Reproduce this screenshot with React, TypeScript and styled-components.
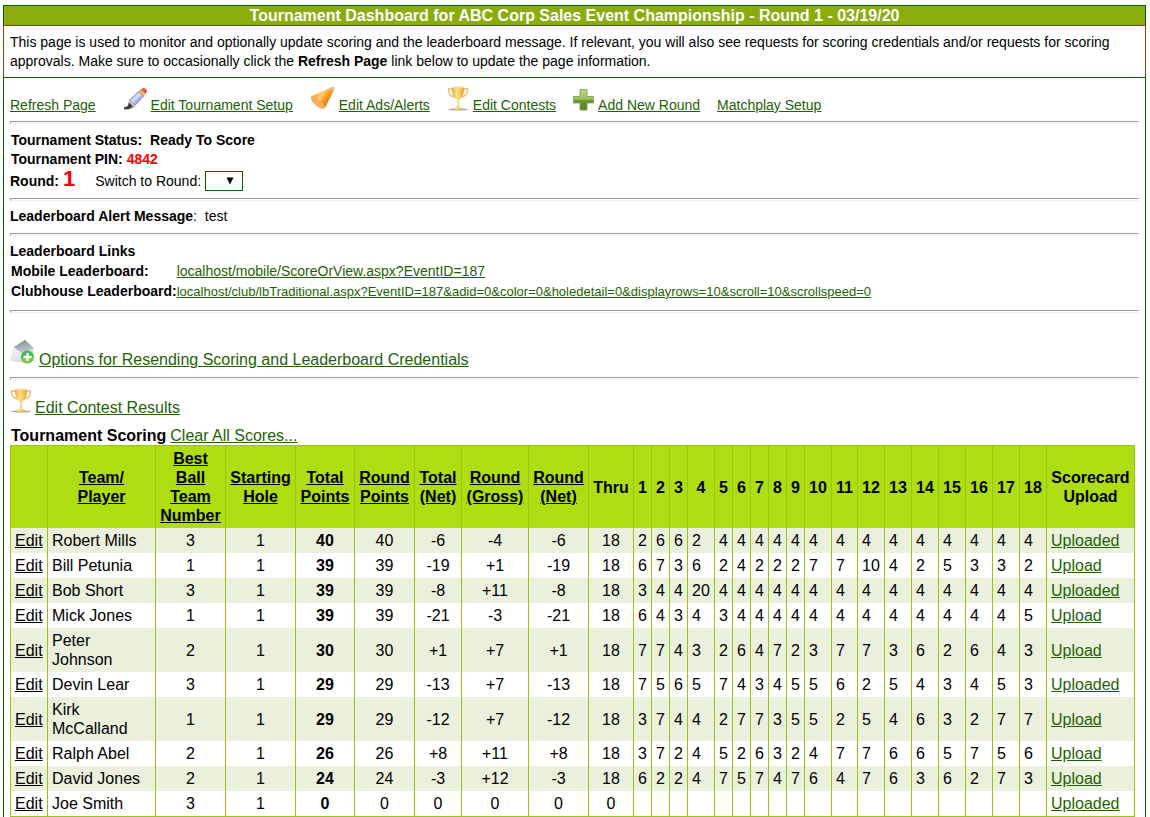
import React from 'react';
import styled, { createGlobalStyle } from 'styled-components';

const GlobalStyle = createGlobalStyle`
  body {
    margin: 0;
    background: #fff;
    color: #000;
    font-family: "Liberation Sans", Arial, sans-serif;
    font-size: 14px;
    line-height: 19px;
  }
`;

const Page = styled.main`
  margin: 5px 4px 0 3px;
`;

const Title = styled.h1`
  margin: 0;
  border: 1px solid #006400;
  border-bottom: 0;
  background: #8aad0c;
  color: #fff;
  font-size: 16px;
  font-weight: bold;
  line-height: 19px;
  text-align: center;
`;

const Intro = styled.p`
  margin: 0;
  border: 1px solid #8b3a1a;
  border-bottom: 0;
  padding: 7px 6px 6px;
`;

const Content = styled.div`
  border: 1px solid #006400;
  border-bottom: 0;
  padding: 0 6px;
`;

const Rule = styled.hr`
  margin: 0;
  border: 1px solid;
  border-color: #9a9a9a #eee #eee #9a9a9a;
  height: 1px;
`;

const Link = styled.a<{ $size?: number; $dark?: boolean }>`
  color: ${(p) => (p.$dark ? '#000' : '#1c6400')};
  font-size: ${(p) => (p.$size ? `${p.$size}px` : 'inherit')};
`;

const Toolbar = styled.nav`
  display: flex;
  align-items: flex-end;
  gap: 17px;
  padding: 8px 0 6px;
`;

const RefreshItem = styled.div`
  padding-right: 10px;
`;

const IconLink = styled.div<{ $gap?: number }>`
  display: flex;
  align-items: flex-end;
  gap: ${(p) => p.$gap ?? 4}px;
`;

const Icon = styled.svg`
  display: block;
  flex: none;
  margin-bottom: 4px;
`;

const StatusSection = styled.section`
  padding: 7px 0 5px;
`;

const AlertSection = styled.section`
  padding: 6px 0 7px;
`;

const Line = styled.div`
  padding-left: 1px;
`;

const Status = styled.strong`
  margin-left: 4px;
`;

const Pin = styled.strong`
  color: #f00;
`;

const RoundLine = styled.div`
  display: flex;
  align-items: center;
  height: 24px;
`;

const RoundNumber = styled.strong`
  margin: 0 20px 6px 4px;
  color: #f00;
  font-size: 22px;
`;

const SelectBox = styled.span`
  position: relative;
  display: inline-block;
  margin-left: 4px;
`;

const RoundSelect = styled.select`
  display: block;
  appearance: none;
  box-sizing: border-box;
  width: 38px;
  height: 20px;
  border: 1px solid #006400;
  border-radius: 0;
  background: #fff;
`;

const Arrow = styled.svg`
  position: absolute;
  top: 6px;
  right: 9px;
  pointer-events: none;
`;

const LinksSection = styled.section`
  padding: 5px 0 9px;
`;

const LinkGrid = styled.div`
  display: grid;
  grid-template-columns: max-content 1fr;
  grid-auto-rows: 20px;
  align-items: center;
  padding-left: 1px;
`;

const Heading = styled.h2`
  margin: 0;
  font-size: 14px;
  line-height: 20px;
`;

const ResendRow = styled.section`
  padding: 26px 0 8px;
  font-size: 16px;
`;

const ContestRow = styled.section`
  padding: 8px 0 9px;
  font-size: 16px;
`;

const ScoringHeading = styled.div`
  display: flex;
  gap: 4px;
  padding-left: 1px;
  font-size: 16px;
`;

const Table = styled.table`
  width: calc(100% - 4px);
  table-layout: fixed;
  border-collapse: collapse;
  border: 1px solid #99c410;
  font-size: 16px;
  line-height: 19px;
`;

const HeadCell = styled.th`
  padding: 3px 0;
  border: solid #99c410;
  border-width: 1px 1px 0;
  background: #aedd11;
  white-space: nowrap;
`;

const Row = styled.tr`
  &:nth-child(odd) {
    background: #ebf0dd;
  }
`;

const Cell = styled.td<{ $center?: boolean; $bold?: boolean }>`
  padding: 3px 0 3px ${(p) => (p.$center ? 0 : 4)}px;
  border: solid #99c410;
  border-width: 0 1px;
  text-align: ${(p) => (p.$center ? 'center' : 'left')};
  font-weight: ${(p) => (p.$bold ? 'bold' : 'normal')};
`;

const PencilIcon = () => (
  <Icon width="25" height="24" viewBox="0 0 25 24" aria-hidden="true">
    <defs>
      <linearGradient id="barrel" x1="0.2" y1="0.2" x2="0.8" y2="0.8">
        <stop offset="0" stopColor="#8284cf" />
        <stop offset="0.4" stopColor="#dfe1fb" />
        <stop offset="0.7" stopColor="#a9abe6" />
        <stop offset="1" stopColor="#6466b4" />
      </linearGradient>
    </defs>
    <path d="M3 22.500 Q9 23 13 19 L9 18Z" fill="#c4c4c4" />
    <path d="M4 20 L6 13 L12 18Z" fill="#e9c79c" />
    <path d="M1 22.500 V20.500 L5 19 L6 15.500 L10 19.500 L6 22Z" fill="#3a3a3e" />
    <path d="M6.500 13 L15.500 4.500 L20.500 9 L12 18.500Z" fill="url(#barrel)" stroke="#6a6cb4" strokeWidth="0.6" />
    <path d="M15.500 4.500 L18 2.500 L22.500 6.500 L20.500 9Z" fill="#efc35a" stroke="#a97e45" strokeWidth="0.5" />
    <path d="M18 2.500 Q20.500 0 23 2 Q25 4 22.500 6.500Z" fill="#d8483a" />
    <path d="M19.500 2.300 Q21.500 1.500 22.500 3.200" stroke="#f29a8c" fill="none" />
  </Icon>
);

const ConeIcon = () => (
  <Icon width="25" height="25" viewBox="0 0 25 25" aria-hidden="true">
    <defs>
      <linearGradient id="cone" x1="0.2" y1="0.2" x2="0.9" y2="0.7">
        <stop offset="0" stopColor="#f39a26" />
        <stop offset="0.35" stopColor="#ffcf74" />
        <stop offset="0.6" stopColor="#f99d1c" />
        <stop offset="1" stopColor="#d96d00" />
      </linearGradient>
    </defs>
    <path d="M1 10.500 L21 1.500 Q25 0 24 4 L15 22 Q12 24 6 19.500 Q0 14 1 10.500Z" fill="url(#cone)" />
    <path d="M1 10.500 Q4 9.500 10 14.500 Q15.500 19 15 22 Q12 24 6 19.500 Q0 14 1 10.500Z" fill="#f5b05a" />
    <path d="M20 2 Q24 -1 24.500 2 Q25 4 23 6Z" fill="#dfc3a4" />
  </Icon>
);

const TrophyIcon = () => (
  <Icon width="22" height="25" viewBox="0 0 22 25" aria-hidden="true">
    <defs>
      <linearGradient id="gold" x1="0" y1="0" x2="1" y2="0">
        <stop offset="0" stopColor="#e9ad35" />
        <stop offset="0.4" stopColor="#ffe08b" />
        <stop offset="1" stopColor="#e6a92e" />
      </linearGradient>
    </defs>
    <ellipse cx="11" cy="23.500" rx="10" ry="1" fill="#aaa" />
    <path d="M6 3 H1.500 Q1 10 8 11 M16 3 H20.500 Q21 10 14 11" fill="none" stroke="#e8bd63" strokeWidth="1.3" />
    <path d="M5 1.500 H17 Q17.500 9 14 12 Q12 13.500 12 15 V19 Q12 21 15.500 22.500 V23.500 H6.500 V22.500 Q10 21 10 19 V15 Q10 13.500 8 12 Q4.500 9 5 1.500Z" fill="url(#gold)" />
    <ellipse cx="11" cy="1.500" rx="6" ry="1" fill="#f6d995" />
  </Icon>
);

const PlusIcon = () => (
  <Icon width="21" height="22" viewBox="0 0 21 22" aria-hidden="true">
    <defs>
      <linearGradient id="plus" x1="0" y1="0" x2="0" y2="1">
        <stop offset="0" stopColor="#b9d48a" />
        <stop offset="0.48" stopColor="#9abc63" />
        <stop offset="0.52" stopColor="#6f9a31" />
        <stop offset="1" stopColor="#55811e" />
      </linearGradient>
    </defs>
    <path d="M7 0.500 H14 V7.500 H20.500 V14 H14 V21 H7 V14 H0.500 V7.500 H7Z" fill="url(#plus)" stroke="#7da04a" strokeWidth="0.8" />
  </Icon>
);

const MailIcon = () => (
  <Icon width="25" height="26" viewBox="0 0 25 26" aria-hidden="true">
    <defs>
      <linearGradient id="paper" x1="0" y1="0" x2="1" y2="1">
        <stop offset="0" stopColor="#fff" />
        <stop offset="1" stopColor="#c8cdd2" />
      </linearGradient>
      <linearGradient id="flap" x1="0" y1="0" x2="0.3" y2="1">
        <stop offset="0" stopColor="#7d8790" />
        <stop offset="1" stopColor="#c4cbd1" />
      </linearGradient>
    </defs>
    <path d="M4 8 L15 1 L23.500 9 L21 20 L14 23.500 L0.500 21.500Z" fill="url(#paper)" stroke="#d5d9dc" strokeWidth="0.5" />
    <path d="M4 8 L15 1 L23.500 9 L13 15Z" fill="url(#flap)" />
    <circle cx="17.500" cy="18" r="6.500" fill="#43b55a" />
    <path d="M11.500 20 Q18 18 24 17 A6.500 6.500 0 0 1 11.500 20Z" fill="#7fce2e" />
    <path d="M17.500 14 V22 M13.500 18 H21.500" stroke="#fff" strokeWidth="2.4" />
  </Icon>
);

const COLUMN_WIDTHS = [
  37, 108, 70, 70, 59, 60, 47, 67, 60, 45,
  18, 18, 18, 27, 18, 18, 18, 18, 18,
  27, 26, 27, 27, 27, 27, 27, 27, 27, 88,
];

const SORT_HEADERS: string[][] = [
  ['Team/', 'Player'],
  ['Best', 'Ball', 'Team', 'Number'],
  ['Starting', 'Hole'],
  ['Total', 'Points'],
  ['Round', 'Points'],
  ['Total', '(Net)'],
  ['Round', '(Gross)'],
  ['Round', '(Net)'],
];

const HOLES = Array.from({ length: 18 }, (_, i) => i + 1);

interface Player {
  name: string;
  stats: string[];
  holes: string;
  upload: string;
}

// Stats: best ball team, starting hole, total points, round points, total net, round gross, round net, thru.
const PLAYERS: Player[] = [
  { name: 'Robert Mills', stats: ['3', '1', '40', '40', '-6', '-4', '-6', '18'], holes: '2 6 6 2 4 4 4 4 4 4 4 4 4 4 4 4 4 4', upload: 'Uploaded' },
  { name: 'Bill Petunia', stats: ['1', '1', '39', '39', '-19', '+1', '-19', '18'], holes: '6 7 3 6 2 4 2 2 2 7 7 10 4 2 5 3 3 2', upload: 'Upload' },
  { name: 'Bob Short', stats: ['3', '1', '39', '39', '-8', '+11', '-8', '18'], holes: '3 4 4 20 4 4 4 4 4 4 4 4 4 4 4 4 4 4', upload: 'Uploaded' },
  { name: 'Mick Jones', stats: ['1', '1', '39', '39', '-21', '-3', '-21', '18'], holes: '6 4 3 4 3 4 4 4 4 4 4 4 4 4 4 4 4 5', upload: 'Upload' },
  { name: 'Peter\nJohnson', stats: ['2', '1', '30', '30', '+1', '+7', '+1', '18'], holes: '7 7 4 3 2 6 4 7 2 3 7 7 3 6 2 6 4 3', upload: 'Upload' },
  { name: 'Devin Lear', stats: ['3', '1', '29', '29', '-13', '+7', '-13', '18'], holes: '7 5 6 5 7 4 3 4 5 5 6 2 5 4 3 4 5 3', upload: 'Uploaded' },
  { name: 'Kirk\nMcCalland', stats: ['1', '1', '29', '29', '-12', '+7', '-12', '18'], holes: '3 7 4 4 2 7 7 3 5 5 2 5 4 6 3 2 7 7', upload: 'Upload' },
  { name: 'Ralph Abel', stats: ['2', '1', '26', '26', '+8', '+11', '+8', '18'], holes: '3 7 2 4 5 2 6 3 2 4 7 7 6 6 5 7 5 6', upload: 'Upload' },
  { name: 'David Jones', stats: ['2', '1', '24', '24', '-3', '+12', '-3', '18'], holes: '6 2 2 4 7 5 7 4 7 6 4 7 6 3 6 2 7 3', upload: 'Upload' },
  { name: 'Joe Smith', stats: ['3', '1', '0', '0', '0', '0', '0', '0'], holes: '', upload: 'Uploaded' },
];

const withBreaks = (lines: string[]) =>
  lines.map((line, i) => (
    <React.Fragment key={line}>
      {i > 0 && <br />}
      {line}
    </React.Fragment>
  ));

const ScoreTable = () => (
  <Table>
    <colgroup>
      {COLUMN_WIDTHS.map((width, i) => (
        <col key={i} width={width} />
      ))}
    </colgroup>
    <thead>
      <tr>
        <HeadCell />
        {SORT_HEADERS.map((lines) => (
          <HeadCell key={lines.join(' ')} scope="col">
            <Link href="#" $dark>{withBreaks(lines)}</Link>
          </HeadCell>
        ))}
        <HeadCell scope="col">Thru</HeadCell>
        {HOLES.map((hole) => (
          <HeadCell key={hole} scope="col">{hole}</HeadCell>
        ))}
        <HeadCell scope="col">{withBreaks(['Scorecard', 'Upload'])}</HeadCell>
      </tr>
    </thead>
    <tbody>
      {PLAYERS.map((player) => {
        const scores = player.holes.split(' ');
        return (
          <Row key={player.name}>
            <Cell><Link href="#" $dark>Edit</Link></Cell>
            <Cell>{withBreaks(player.name.split('\n'))}</Cell>
            {player.stats.map((value, i) => (
              <Cell key={i} $center $bold={i === 2}>{value}</Cell>
            ))}
            {HOLES.map((hole) => (
              <Cell key={hole}>{scores[hole - 1]}</Cell>
            ))}
            <Cell><Link href="#">{player.upload}</Link></Cell>
          </Row>
        );
      })}
    </tbody>
  </Table>
);

export default function App() {
  return (
    <Page>
      <GlobalStyle />
      <Title>Tournament Dashboard for ABC Corp Sales Event Championship - Round 1 - 03/19/20</Title>
      <Intro>
        This page is used to monitor and optionally update scoring and the leaderboard message. If relevant, you will
        also see requests for scoring credentials and/or requests for scoring approvals. Make sure to occasionally
        click the <strong>Refresh Page</strong> link below to update the page information.
      </Intro>
      <Content>
        <Toolbar>
          <RefreshItem><Link href="#">Refresh Page</Link></RefreshItem>
          <IconLink $gap={3}><PencilIcon /><Link href="#">Edit Tournament Setup</Link></IconLink>
          <IconLink><ConeIcon /><Link href="#">Edit Ads/Alerts</Link></IconLink>
          <IconLink><TrophyIcon /><Link href="#">Edit Contests</Link></IconLink>
          <IconLink><PlusIcon /><Link href="#">Add New Round</Link></IconLink>
          <Link href="#">Matchplay Setup</Link>
        </Toolbar>
        <Rule />
        <StatusSection>
          <Line><strong>Tournament Status:</strong> <Status>Ready To Score</Status></Line>
          <Line><strong>Tournament PIN:</strong> <Pin>4842</Pin></Line>
          <RoundLine>
            <strong>Round:</strong>
            <RoundNumber>1</RoundNumber>
            <label htmlFor="round">Switch to Round:</label>
            <SelectBox>
              <RoundSelect id="round" defaultValue="">
                <option value="" />
                <option value="1">1</option>
              </RoundSelect>
              <Arrow width="8" height="8" viewBox="0 0 8 8" aria-hidden="true">
                <path d="M0.500 0.500 H7.500 L4 7.500Z" />
              </Arrow>
            </SelectBox>
          </RoundLine>
        </StatusSection>
        <Rule />
        <AlertSection><strong>Leaderboard Alert Message</strong>:&nbsp; test</AlertSection>
        <Rule />
        <LinksSection>
          <Heading>Leaderboard Links</Heading>
          <LinkGrid>
            <strong>Mobile Leaderboard:</strong>
            <Link href="#">localhost/mobile/ScoreOrView.aspx?EventID=187</Link>
            <strong>Clubhouse Leaderboard:</strong>
            <Link href="#" $size={13}>
              localhost/club/lbTraditional.aspx?EventID=187&amp;adid=0&amp;color=0&amp;holedetail=0&amp;displayrows=10&amp;scroll=10&amp;scrollspeed=0
            </Link>
          </LinkGrid>
        </LinksSection>
        <Rule />
        <ResendRow>
          <IconLink><MailIcon /><Link href="#">Options for Resending Scoring and Leaderboard Credentials</Link></IconLink>
        </ResendRow>
        <Rule />
        <ContestRow>
          <IconLink $gap={3}><TrophyIcon /><Link href="#">Edit Contest Results</Link></IconLink>
        </ContestRow>
        <ScoringHeading>
          <strong>Tournament Scoring</strong>
          <Link href="#">Clear All Scores...</Link>
        </ScoringHeading>
        <ScoreTable />
      </Content>
    </Page>
  );
}
